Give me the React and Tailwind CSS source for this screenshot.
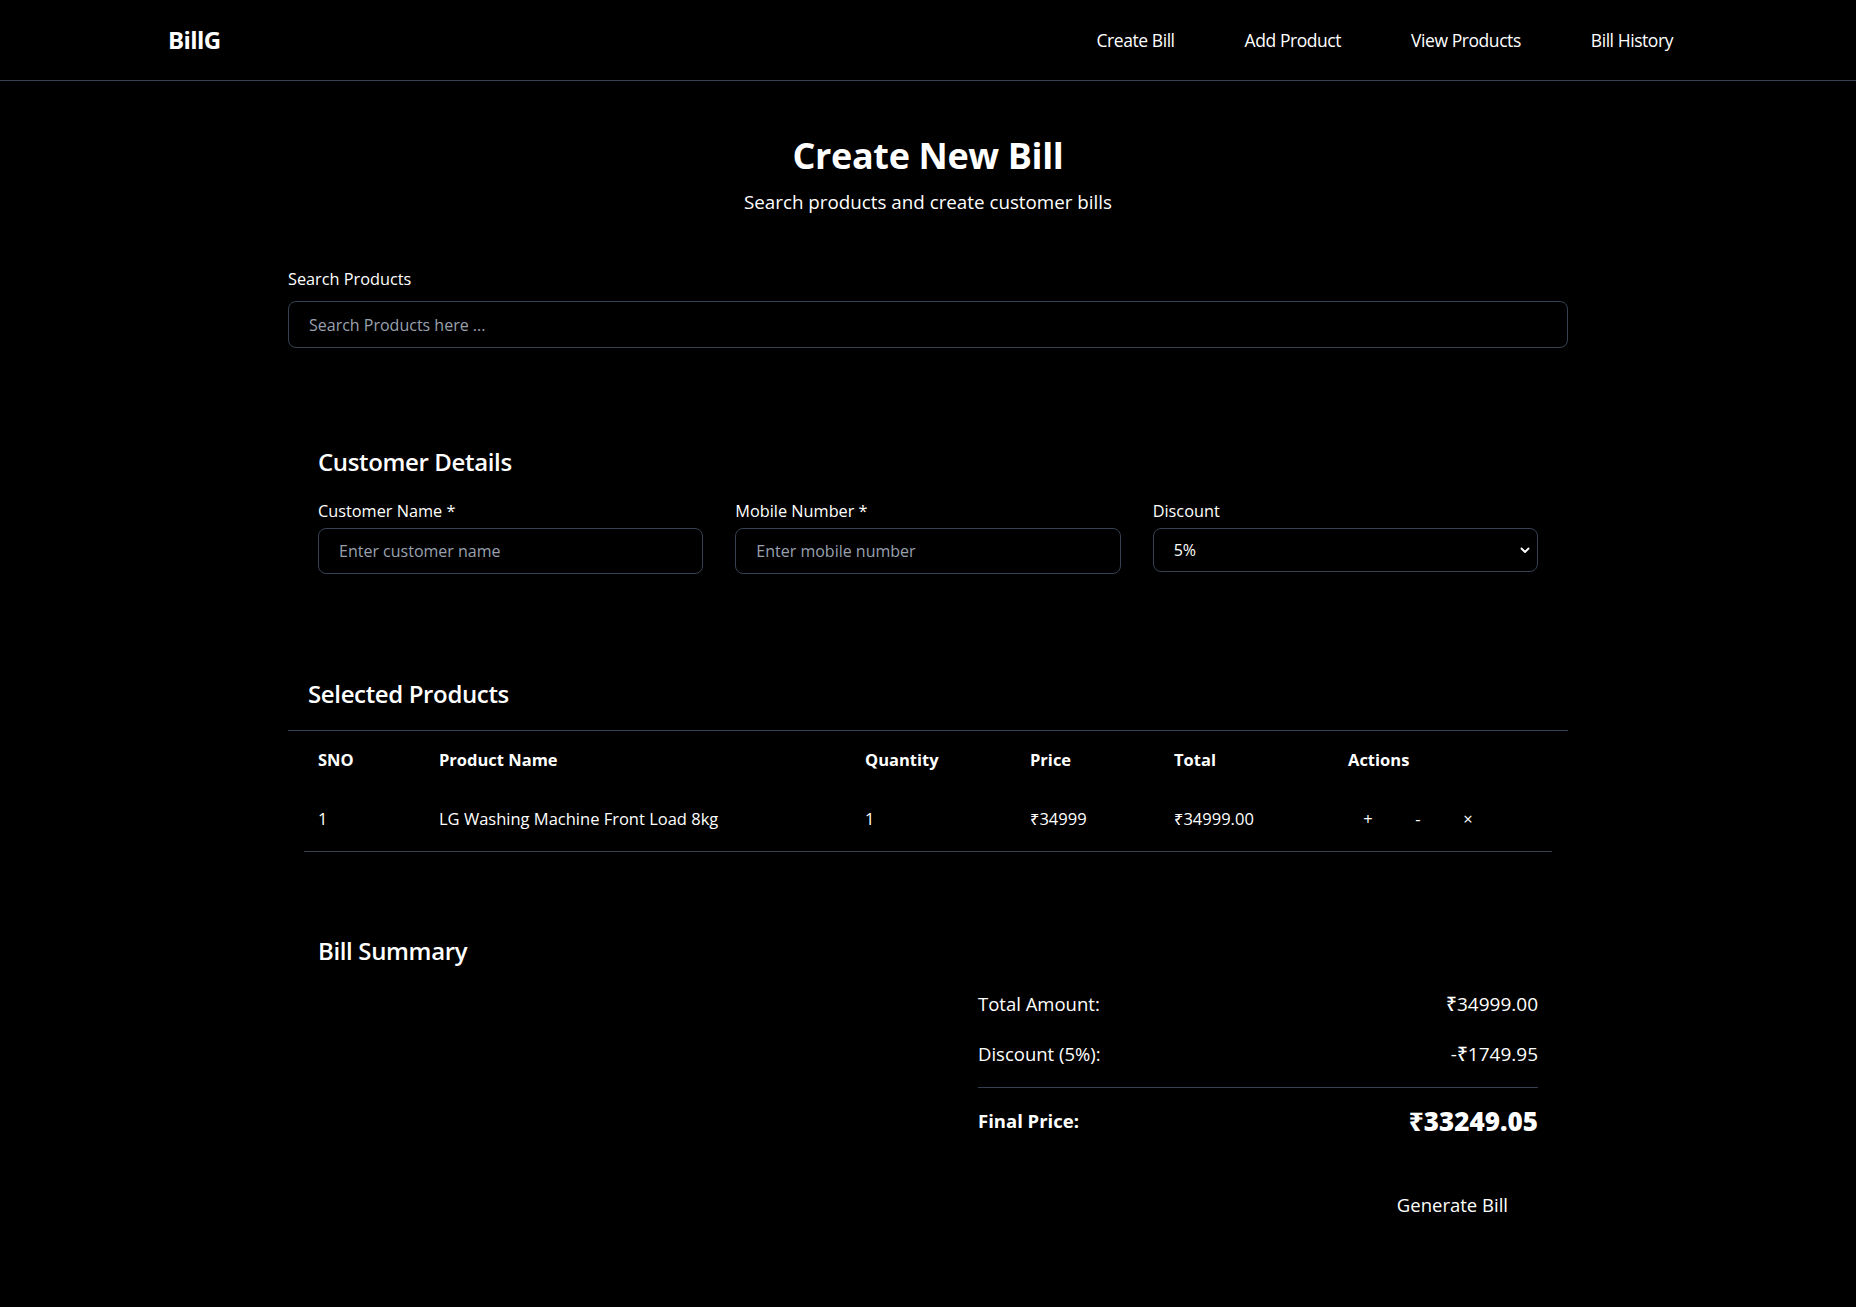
import React from "react";

const font = { fontFamily: "'Open Sans', 'Noto Sans', 'DejaVu Sans', sans-serif" };

const Navbar = () => {
  return (
    <nav className="h-[81px] border-b border-gray-700 bg-black">
      <div className="mx-auto flex h-full max-w-[1536px] items-center justify-between px-2">
        <span className="text-2xl font-bold tracking-tight text-white">BillG</span>
        <div className="mr-[15px] flex items-center gap-[70px] text-[17.5px] tracking-tight text-white">
          <a href="#">Create Bill</a>
          <a href="#">Add Product</a>
          <a href="#">View Products</a>
          <a href="#">Bill History</a>
        </div>
      </div>
    </nav>
  );
};

const Field = ({ label, placeholder }) => (
  <div className="flex flex-col">
    <label className="mb-[5px] text-[16.3px] leading-6 text-white">{label}</label>
    <input
      placeholder={placeholder}
      className="h-[46px] rounded-lg border border-gray-700 bg-black px-5 text-base text-white placeholder:text-gray-400 outline-none"
    />
  </div>
);

const App = () => {
  return (
    <div className="min-h-[1307px] bg-black text-white" style={font}>
      <Navbar />
      <main className="mx-auto max-w-7xl">
        <div className="pt-[55px] text-center">
          <h1 className="text-4xl font-bold tracking-[-0.01em]">Create New Bill</h1>
          <p className="mt-3 text-[18.8px] leading-7">Search products and create customer bills</p>
        </div>

        <div className="mt-[51px]">
          <label className="mb-[10px] block text-[16.3px] leading-6">Search Products</label>
          <input
            placeholder="Search Products here ..."
            className="h-[47px] w-full rounded-lg border border-gray-700 bg-black px-5 text-base text-white placeholder:text-gray-400 outline-none"
          />
        </div>

        {/* customer */}
        <section className="mt-[98px] px-[30px]">
          <h2 className="text-2xl font-semibold tracking-[-0.015em]">Customer Details</h2>
          <div className="mt-[21px] grid grid-cols-3 gap-8">
            <Field label="Customer Name *" placeholder="Enter customer name" />
            <Field label="Mobile Number *" placeholder="Enter mobile number" />
            <div className="flex flex-col">
              <label className="mb-[5px] text-[16.3px] leading-6">Discount</label>
              <div className="relative">
                <select className="h-[44px] w-full appearance-none rounded-lg border border-gray-700 bg-black px-5 text-base text-white outline-none">
                  <option>5%</option>
                  <option>0%</option>
                  <option>10%</option>
                </select>
                <svg
                  className="pointer-events-none absolute right-[7px] top-[16px]"
                  width="12"
                  height="12"
                  viewBox="0 0 12 12"
                  fill="none"
                  stroke="white"
                  strokeWidth="1.8"
                  strokeLinecap="round"
                  strokeLinejoin="round"
                >
                  <path d="M2.5 4.5 6 8 9.5 4.5" />
                </svg>
              </div>
            </div>
          </div>
        </section>

        {/* products */}
        <section className="mt-[104px]">
          <h2 className="border-b border-gray-700 px-5 pb-5 text-2xl font-semibold tracking-[-0.015em]">Selected Products</h2>
          <div className="mx-4">
            <table className="w-full border-collapse text-left text-[16.5px] leading-6">
              <thead>
                <tr className="h-[57px] font-bold">
                  <th className="w-[121px] pl-[14px]">SNO</th>
                  <th className="w-[426px] pl-[14px]">Product Name</th>
                  <th className="w-[165px] pl-[14px]">Quantity</th>
                  <th className="w-[144px] pl-[14px]">Price</th>
                  <th className="w-[174px] pl-[14px]">Total</th>
                  <th className="pl-[14px]">Actions</th>
                </tr>
              </thead>
              <tbody>
                <tr className="h-[63px] border-b border-gray-700">
                  <td className="pl-[14px]">1</td>
                  <td className="pl-[14px]">LG Washing Machine Front Load 8kg</td>
                  <td className="pl-[14px]">1</td>
                  <td className="pl-[14px]">₹34999</td>
                  <td className="pl-[14px]">₹34999.00</td>
                  <td className="pl-[9px]">
                    <div className="flex">
                      <button className="w-[50px] text-center">+</button>
                      <button className="w-[50px] text-center">-</button>
                      <button className="w-[50px] text-center">×</button>
                    </div>
                  </td>
                </tr>
              </tbody>
            </table>
          </div>
        </section>

        {/* summary */}
        <section className="mt-[83px] px-[30px] pb-[50px]">
          <h2 className="text-2xl font-semibold tracking-[-0.015em]">Bill Summary</h2>
          <div className="ml-auto mt-[23px] w-[560px] text-[18.5px] leading-7">
            <div className="flex justify-between">
              <span>Total Amount:</span>
              <span className="text-[19px] font-medium">₹34999.00</span>
            </div>
            <div className="mt-[22px] flex justify-between">
              <span>Discount (5%):</span>
              <span className="text-[19px] font-medium">-₹1749.95</span>
            </div>
            <div className="mt-[19px] flex items-center justify-between border-t border-gray-700 pt-[17px]">
              <span className="font-bold">Final Price:</span>
              <span className="text-[26px] font-extrabold leading-8">₹33249.05</span>
            </div>
            <div className="mt-[42px] flex justify-end">
              <button className="px-[30px] py-3 text-[18.5px] leading-7 text-white">Generate Bill</button>
            </div>
          </div>
        </section>
      </main>
    </div>
  );
};

export default App;
